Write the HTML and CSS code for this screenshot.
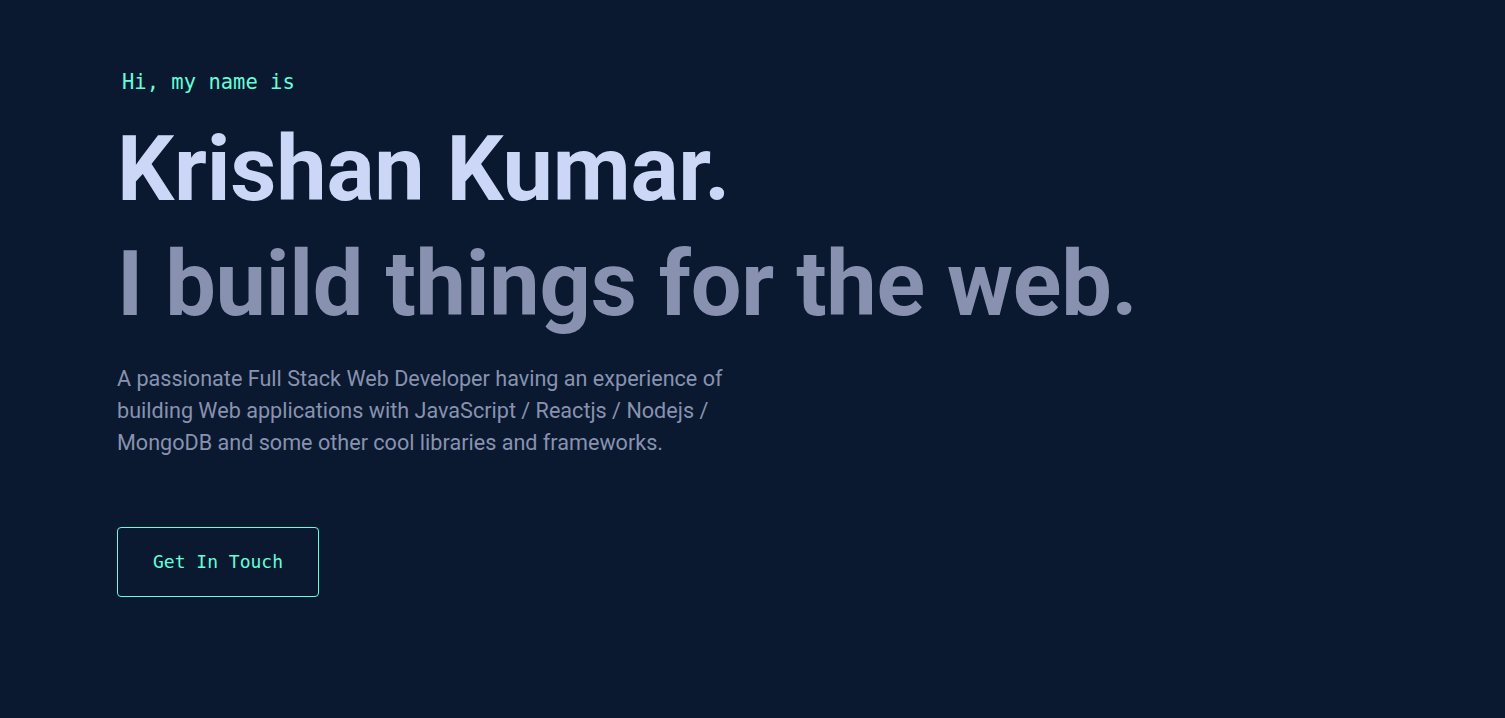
FILE: index.html
```html
<!DOCTYPE html>
<html lang="en">
<head>
<meta charset="utf-8">
<title>Krishan Kumar</title>
<link rel="stylesheet" href="styles.css">
</head>
<body>
<main class="hero">
  <h1 class="intro">Hi, my name is</h1>
  <h2 class="big-heading name">Krishan Kumar.</h2>
  <h3 class="big-heading tagline">I build things for the web.</h3>
  <p class="about">A passionate Full Stack Web Developer having an experience of building Web applications with JavaScript / Reactjs / Nodejs / MongoDB and some other cool libraries and frameworks.</p>
  <a class="cta" href="#contact">Get In Touch</a>
</main>
</body>
</html>
```
FILE: styles.css
```css
html, body {
  margin: 0;
  padding: 0;
  background: #0a192f;
  height: 100%;
}
body {
  font-family: "Roboto", "Inter", sans-serif;
  color: #8892b0;
}
.hero {
  display: flex;
  flex-direction: column;
  align-items: flex-start;
  padding: 71px 0 0 117px;
}
.intro {
  margin: 0 0 26px 5px;
  font-family: "DejaVu Sans Mono", monospace;
  font-weight: 400;
  font-size: 20.5px;
  line-height: 1.1;
  color: #64ffda;
}
.big-heading {
  margin: 0;
  font-family: "Roboto", sans-serif;
  font-weight: 700;
  font-size: 90px;
  line-height: 1.1;
  letter-spacing: -0.25px;
}
.name {
  color: #ccd6f6;
}
.tagline {
  margin-top: 16px;
  color: #8892b0;
}
.about {
  margin: 29px 0 0;
  max-width: 640px;
  font-family: "Roboto", sans-serif;
  font-size: 21.6px;
  line-height: 32px;
  color: #8892b0;
}
.cta {
  margin-top: 68px;
  box-sizing: border-box;
  width: 202px;
  height: 70px;
  display: flex;
  align-items: center;
  justify-content: center;
  border: 1px solid #64ffda;
  border-radius: 4px;
  font-family: "DejaVu Sans Mono", monospace;
  font-size: 18px;
  color: #64ffda;
  text-decoration: none;
}
```
